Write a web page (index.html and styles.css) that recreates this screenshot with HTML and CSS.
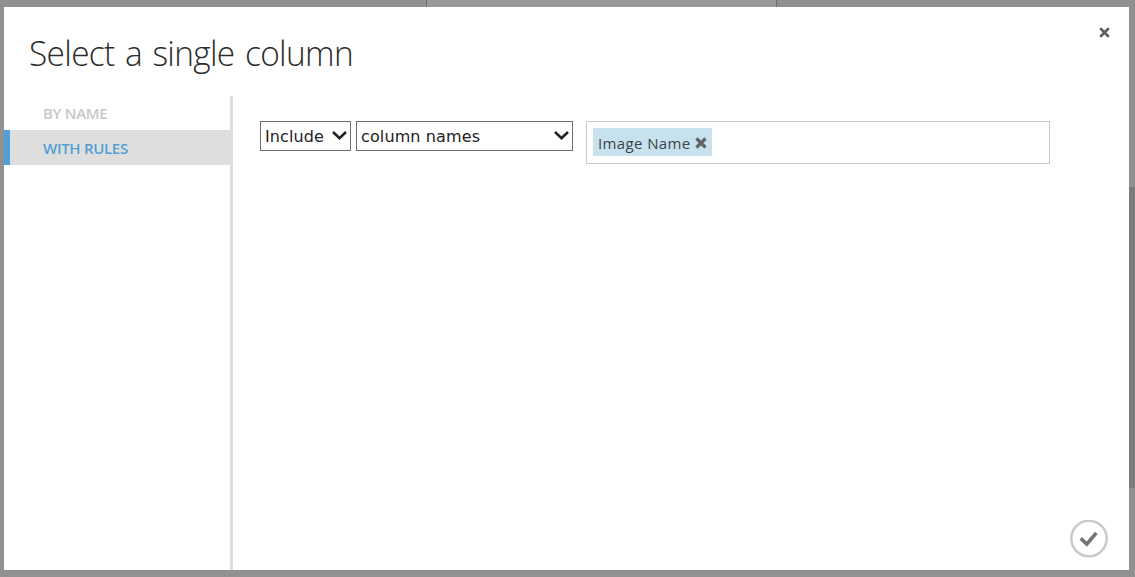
FILE: index.html
```
<!DOCTYPE html>
<html lang="en">
<head>
<meta charset="utf-8">
<title>Select a single column</title>
<link rel="stylesheet" href="styles.css">
</head>
<body>
<div class="backdrop-top"><span class="backdrop-panel"></span></div>
<div class="backdrop-scroll"></div>
<main class="dialog">
  <header class="header">
    <h1 class="title">Select a single column</h1>
    <button class="close" aria-label="Close"><svg width="11" height="11" viewBox="0 0 11 11"><path d="M2 2L9 9M9 2L2 9" stroke="#606060" stroke-width="2.8" stroke-linecap="round"/></svg></button>
  </header>
  <div class="body">
    <nav class="tabs">
      <a class="tab"><span class="tab-text">BY NAME</span></a>
      <a class="tab active"><span class="tab-text">WITH RULES</span></a>
    </nav>
    <section class="content">
      <div class="rule">
        <div class="select mode"><span>Include</span><svg class="chevron" width="15" height="10" viewBox="0 0 15 10"><path d="M1 1L7.5 7.3L14 1" fill="none" stroke="#222" stroke-width="2.6"/></svg></div>
        <div class="select kind"><span>column names</span><svg class="chevron" width="15" height="10" viewBox="0 0 15 10"><path d="M1 1L7.5 7.3L14 1" fill="none" stroke="#222" stroke-width="2.6"/></svg></div>
        <div class="values">
          <div class="tag"><span class="tag-text">Image Name</span><svg class="remove" width="12" height="12" viewBox="0 0 12 12"><path d="M1.5 1.5L10.5 10.5M10.5 1.5L1.5 10.5" stroke="#606465" stroke-width="3.2"/></svg></div>
        </div>
      </div>
      <button class="confirm" aria-label="Confirm"><svg width="38" height="38" viewBox="0 0 38 38"><circle cx="19" cy="18.5" r="17.7" fill="#fff" stroke="#cacaca" stroke-width="2.5"/><path d="M10.8 18.4L16.8 24.2L26.3 12.8" fill="none" stroke="#747474" stroke-width="3.6"/></svg></button>
    </section>
  </div>
</main>
</body>
</html>
```
FILE: styles.css
```
* { box-sizing: border-box; }
body {
  margin: 0;
  height: 577px;
  padding: 7px 6px 7px 4px;
  overflow: hidden;
  background: #919191;
  font-family: "Open Sans", "Noto Sans", sans-serif;
}
button { border: 0; padding: 0; background: none; display: block; }
svg { display: block; flex: none; }
span { white-space: nowrap; }
.backdrop-top { position: absolute; top: 0; left: 0; width: 100%; height: 7px; }
.backdrop-panel {
  display: block;
  width: 351px;
  height: 7px;
  margin-left: 426px;
  background: #999;
  border: solid #6c6c6c;
  border-width: 0 1px;
}
.backdrop-scroll { position: absolute; top: 187px; right: 0; width: 6px; height: 301px; background: #7b7b7b; }
.dialog { height: 563px; background: #fff; display: flex; flex-direction: column; }
.header { height: 89px; display: flex; justify-content: space-between; padding: 20px 19px 0 25px; }
.title {
  margin: 0;
  font-size: 35px;
  line-height: 52px;
  font-weight: 300;
  letter-spacing: -0.7px;
  word-spacing: 2.5px;
  transform: scaleX(0.955);
  transform-origin: left;
  color: #2c2c2c;
  white-space: nowrap;
}
.close { width: 11px; height: 11px; }
.body { flex: 1; display: flex; }
.tabs { width: 229px; border-right: 3px solid #dedede; }
.tab {
  display: flex;
  align-items: center;
  height: 35px;
  padding-left: 39px;
  font-size: 15px;
  font-weight: 600;
  color: #c8c8c8;
}
.tab:first-child { height: 34px; }
.tab.active { padding: 1px 0 0 33px; background: #dedede; border-left: 6px solid #4f9fd8; color: #539fd5; }
.tab-text { letter-spacing: -0.3px; }
.content {
  flex: 1;
  padding: 25px 21px 12px 27px;
  display: flex;
  flex-direction: column;
  justify-content: space-between;
}
.rule { display: flex; align-items: flex-start; }
.select {
  height: 30px;
  border: 1px solid #6e6e6e;
  display: flex;
  justify-content: space-between;
  padding: 0 3px 0 4px;
  font: 16px/29px Verdana, "DejaVu Sans", sans-serif;
  letter-spacing: 0.12px;
  color: #222;
}
.mode { width: 91px; margin-right: 5px; }
.kind { width: 217px; margin-right: 13px; }
.chevron { margin-top: 9px; }
.values { width: 464px; height: 43px; border: 1px solid #cacaca; padding: 6px; }
.tag {
  width: 119px;
  height: 28px;
  background: #c8e1ee;
  display: flex;
  align-items: center;
  justify-content: space-between;
  padding: 0 5px;
  font-size: 15px;
  color: #3a4448;
}
.tag-text { letter-spacing: 0.38px; padding-top: 2px; }
.remove { margin-top: 2px; }
.confirm { align-self: flex-end; width: 38px; height: 38px; }
```
